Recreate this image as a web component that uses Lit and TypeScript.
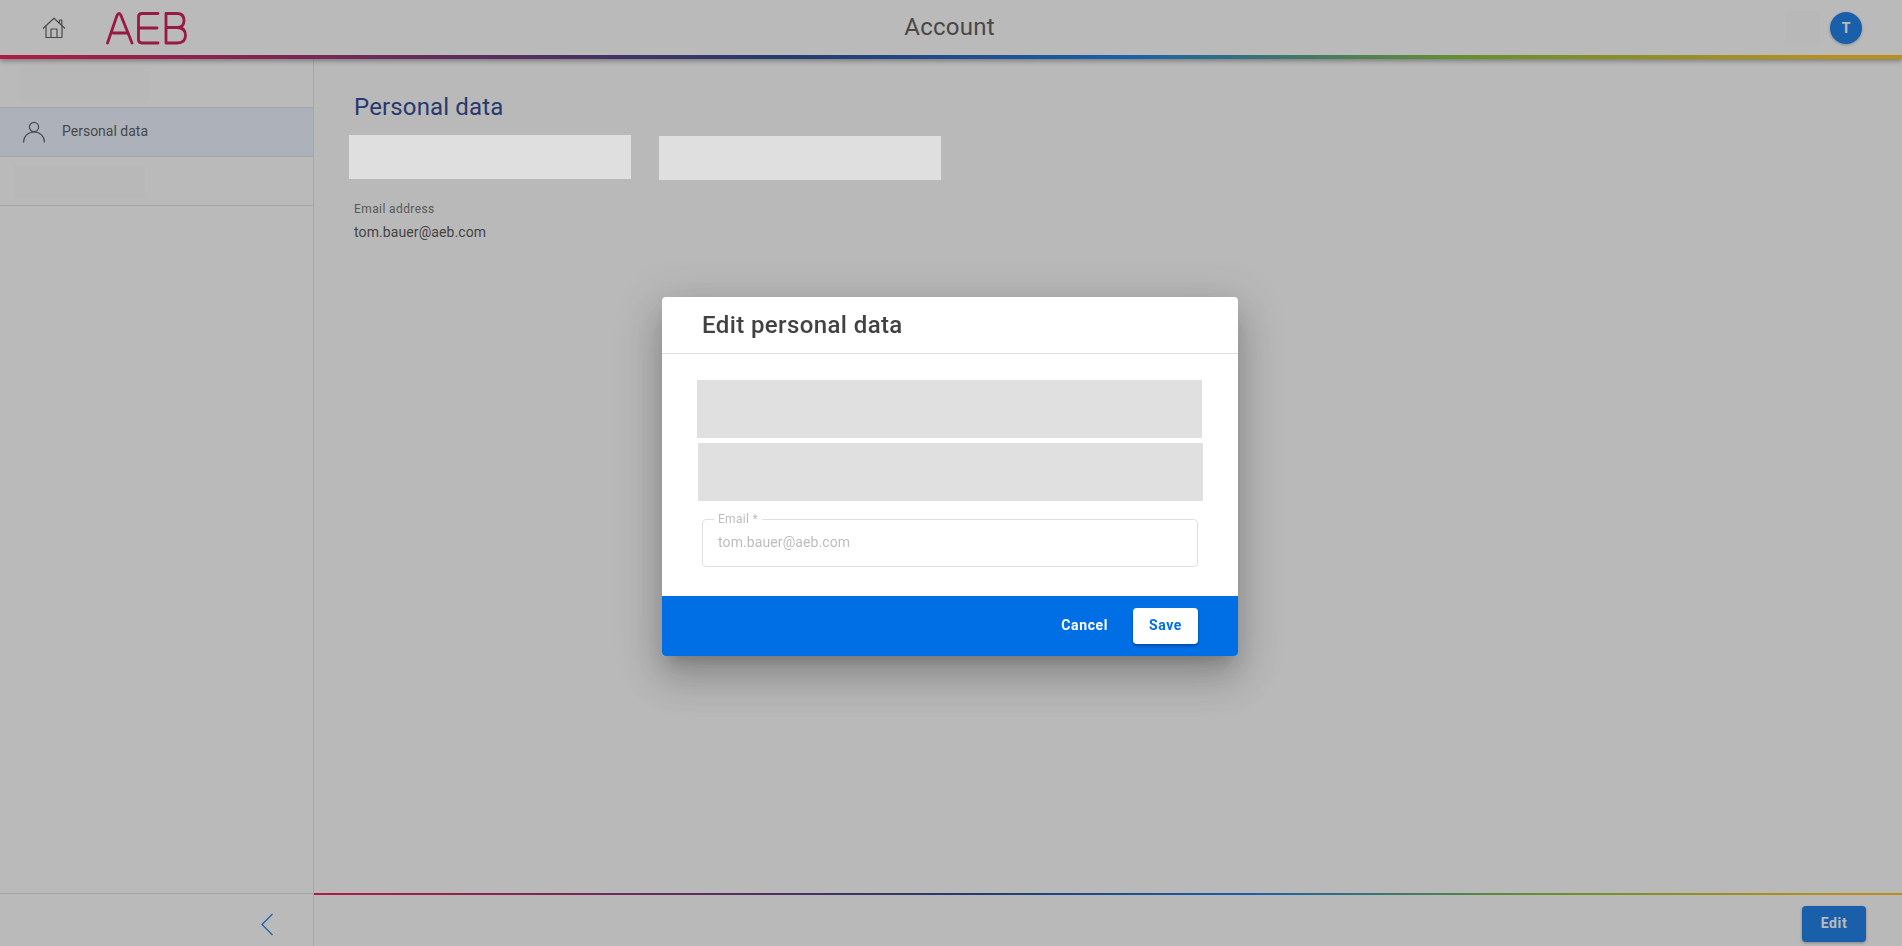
import { LitElement, html, css } from "lit";
import { customElement } from "lit/decorators.js";

@customElement("app-root")
export class AppRoot extends LitElement {
  static styles = css`
    :host {
      display: flex;
      flex-direction: column;
      width: 100%;
      height: 100vh;
      overflow: hidden;
      background: #fff;
      font-family: Roboto, "Liberation Sans", sans-serif;
      color: #424242;
    }
    .topbar {
      flex: none;
      height: 59px;
      display: flex;
      flex-direction: column;
      background: #fff;
      position: relative;
      z-index: 1;
      box-shadow: 0 2px 5px rgba(0, 0, 0, 0.4);
    }
    .topbar-main {
      flex: none;
      height: 55px;
      display: grid;
      grid-template-columns: 1fr auto 1fr;
      align-items: center;
    }
    .brand {
      display: flex;
      align-items: center;
      padding-left: 42px;
      gap: 40px;
    }
    .page-title {
      font-size: 24px;
      line-height: 28px;
      letter-spacing: 0.25px;
      color: #4a4a4a;
      margin: -2px 3px 0 0;
    }
    .user {
      justify-self: end;
      display: flex;
      align-items: center;
      gap: 10px;
      padding-right: 40px;
    }
    .faint {
      background: #fcfcfc;
    }
    .faint.user-mask {
      width: 35px;
      height: 33px;
    }
    .avatar {
      width: 32px;
      height: 32px;
      border-radius: 50%;
      background: #006fe6;
      color: #fff;
      font-size: 14px;
      font-weight: 700;
      display: flex;
      align-items: center;
      justify-content: center;
      box-shadow: 0 1px 3px rgba(0, 0, 0, 0.3);
    }
    .grad {
      flex: none;
      height: 4px;
      background: linear-gradient(
        90deg,
        #ef0343 0%,
        #133386 41%,
        #006fe6 59%,
        #79bc20 77%,
        #fcbc00 96%,
        #fcbc00 100%
      );
    }
    .content {
      flex: 1;
      min-height: 0;
      display: flex;
    }
    .side {
      flex: none;
      width: 313px;
      border-right: 1px solid #e0e0e0;
      display: flex;
      flex-direction: column;
      background: #fff;
    }
    .row {
      flex: none;
      height: 48px;
      border-bottom: 1px solid #e0e0e0;
      display: flex;
      align-items: center;
    }
    .row.pad-a {
      padding-left: 19px;
    }
    .row.pad-b {
      padding-left: 14px;
    }
    .faint.side-mask {
      width: 131px;
      height: 33px;
    }
    .row.active {
      background: #e9f1ff;
      font-size: 14px;
      padding-left: 22px;
      gap: 16px;
      color: #4a4a4a;
    }
    .row.active span {
      margin-top: -2px;
    }
    .spacer {
      flex: 1;
    }
    .side-foot {
      flex: none;
      height: 53px;
      border-top: 1px solid #e0e0e0;
      display: flex;
      justify-content: flex-end;
      align-items: center;
      padding: 8px 40px 0 0;
      box-sizing: border-box;
    }
    .main {
      flex: 1;
      min-width: 0;
      display: flex;
      flex-direction: column;
      background: #fdfdfd;
    }
    .main-body {
      flex: 1;
      padding: 33px 0 0 35px;
    }
    .main-body h1 {
      margin: 0 0 0 5px;
      font-size: 24px;
      line-height: 31px;
      font-weight: 400;
      letter-spacing: 0.15px;
      color: #133386;
    }
    .mask-row {
      display: flex;
      gap: 28px;
      margin-top: 12px;
    }
    .mask {
      position: relative;
      z-index: 11;
      background: #dfdfdf;
    }
    .mask.wide {
      width: 282px;
      height: 44px;
    }
    .mask.wide.second {
      margin-top: 1px;
    }
    .field-read {
      margin: 22px 0 0 5px;
    }
    .field-read .lbl {
      font-size: 12px;
      line-height: 14px;
      letter-spacing: 0.4px;
      color: #666;
    }
    .field-read .val {
      font-size: 14px;
      line-height: 18px;
      margin-top: 7px;
      letter-spacing: 0.1px;
      color: #424242;
    }
    .main-foot {
      flex: none;
      height: 53px;
      box-sizing: border-box;
      display: flex;
      flex-direction: column;
    }
    .grad.thin {
      height: 2px;
    }
    .main-actions {
      flex: 1;
      display: flex;
      justify-content: flex-end;
      align-items: flex-start;
      padding: 11px 36px 0 0;
    }
    .btn-edit {
      width: 64px;
      height: 36px;
      border: 0;
      border-radius: 4px;
      padding: 0 0 2px;
      background: #006fe6;
      color: #fff;
      font: 700 14px Roboto, sans-serif;
      letter-spacing: 0.6px;
      box-shadow: 0 1px 3px rgba(0, 0, 0, 0.35);
    }
    .overlay {
      position: fixed;
      inset: 0;
      z-index: 10;
      background: rgba(70, 70, 70, 0.373);
      display: flex;
      align-items: center;
      justify-content: center;
      box-sizing: border-box;
      padding: 7px 2px 0 0;
    }
    .dialog {
      width: 576px;
      height: 359px;
      border-radius: 4px;
      overflow: hidden;
      background: #fff;
      display: flex;
      flex-direction: column;
      box-shadow: 0 11px 15px -7px rgba(0, 0, 0, 0.2),
        0 24px 38px 3px rgba(0, 0, 0, 0.14), 0 9px 46px 8px rgba(0, 0, 0, 0.12);
    }
    .dlg-head {
      flex: none;
      height: 56px;
      border-bottom: 1px solid #e0e0e0;
      display: flex;
      align-items: center;
      padding-left: 40px;
    }
    .dlg-head h2 {
      margin: 0;
      font-size: 24px;
      font-weight: 500;
      letter-spacing: 0.4px;
      color: #424242;
    }
    .dlg-body {
      flex: 1;
      display: flex;
      flex-direction: column;
      padding: 26px 0 0 35px;
    }
    .mask.full {
      width: 505px;
      height: 58px;
      background: #e0e0e0;
    }
    .mask.full.second {
      margin: 5px 0 0 1px;
    }
    .email {
      position: relative;
      box-sizing: border-box;
      margin: 18px 0 0 5px;
      width: 496px;
      height: 48px;
      border: 1px solid #e0e0e0;
      border-radius: 4px;
      display: flex;
      align-items: center;
      padding: 0 0 2px 15px;
      font-size: 14px;
      letter-spacing: 0.1px;
      color: #bdbdbd;
    }
    .email label {
      position: absolute;
      top: -8px;
      left: 11px;
      padding: 0 4px;
      background: #fff;
      font-size: 12px;
      line-height: 14px;
      letter-spacing: 0.3px;
      color: #bdbdbd;
    }
    .dlg-foot {
      flex: none;
      height: 60px;
      background: #006fe6;
      display: flex;
      justify-content: flex-end;
      align-items: flex-start;
      padding: 12px 40px 0 0;
      box-sizing: border-box;
    }
    .dlg-foot button {
      height: 36px;
      border: 0;
      border-radius: 4px;
      font: 700 14px Roboto, sans-serif;
      letter-spacing: 0.6px;
      padding: 0 16px 2px;
    }
    .cancel {
      background: transparent;
      color: #fff;
      margin-right: 9px;
    }
    .save {
      background: #fff;
      color: #006fe6;
      width: 65px;
      box-shadow: 0 2px 3px rgba(0, 0, 0, 0.3);
    }
    svg {
      display: block;
      flex: none;
    }
  `;

  render() {
    return html`
      <header class="topbar">
        <div class="topbar-main">
          <div class="brand">
            <svg width="24" height="22" viewBox="0 0 24 22" fill="none" stroke="#4d4d4d" stroke-width="1.2" stroke-linejoin="round">
              <path d="M1 11.5 12 1.2 23 11.5" />
              <path d="M17.5 6.2V3h2.3v5.4" />
              <path d="M4 9v11.5h16V9" />
              <path d="M9 20.5V12h6v8.5" />
            </svg>
            <svg width="83" height="34" viewBox="0 0 83 34" fill="none" stroke="#c80040" stroke-width="2.8" stroke-linecap="round" stroke-linejoin="round">
              <path d="M1.500 32 11 4.500Q13 0.500 15 4.500L26 32" />
              <path d="M7 22H22" />
              <path d="M52 2.500H36Q32.500 2.500 32.500 6V28.500Q32.500 32 36 32H52" />
              <path d="M32.500 17H51" />
              <path d="M60 2.500H71Q78 2.500 78 9.500 78 16.500 71 16.500H60M71 16.500Q79.500 16.500 79.500 24.500 79.500 32 71 32H60V2.500" />
            </svg>
          </div>
          <div class="page-title">Account</div>
          <div class="user"><div class="faint user-mask"></div><div class="avatar">T</div></div>
        </div>
        <div class="grad"></div>
      </header>

      <div class="content">
        <aside class="side">
          <div class="row pad-a"><div class="faint side-mask"></div></div>
          <div class="row active">
            <svg width="24" height="22" viewBox="0 0 24 22" fill="none" stroke="#4a4f5a" stroke-width="1.2">
              <circle cx="12" cy="6" r="4.6" />
              <path d="M1.500 21.500C1.500 15 6 11 12 11S22.500 15 22.500 21.500" />
            </svg>
            <span>Personal data</span>
          </div>
          <div class="row pad-b"><div class="faint side-mask"></div></div>
          <div class="spacer"></div>
          <div class="side-foot">
            <svg width="12" height="23" viewBox="0 0 12 23" fill="none" stroke="#006fe6" stroke-width="1.200">
              <path d="M11.500 1 1 11.500 11.500 22" />
            </svg>
          </div>
        </aside>

        <main class="main">
          <div class="main-body">
            <h1>Personal data</h1>
            <div class="mask-row">
              <div class="mask wide"></div>
              <div class="mask wide second"></div>
            </div>
            <div class="field-read">
              <div class="lbl">Email address</div>
              <div class="val">tom.bauer@aeb.com</div>
            </div>
          </div>
          <div class="main-foot">
            <div class="grad thin"></div>
            <div class="main-actions"><button class="btn-edit">Edit</button></div>
          </div>
        </main>
      </div>

      <div class="overlay">
        <div class="dialog">
          <div class="dlg-head"><h2>Edit personal data</h2></div>
          <div class="dlg-body">
            <div class="mask full"></div>
            <div class="mask full second"></div>
            <div class="email">
              <label>Email *</label>
              <span>tom.bauer@aeb.com</span>
            </div>
          </div>
          <div class="dlg-foot">
            <button class="cancel">Cancel</button>
            <button class="save">Save</button>
          </div>
        </div>
      </div>
    `;
  }
}
